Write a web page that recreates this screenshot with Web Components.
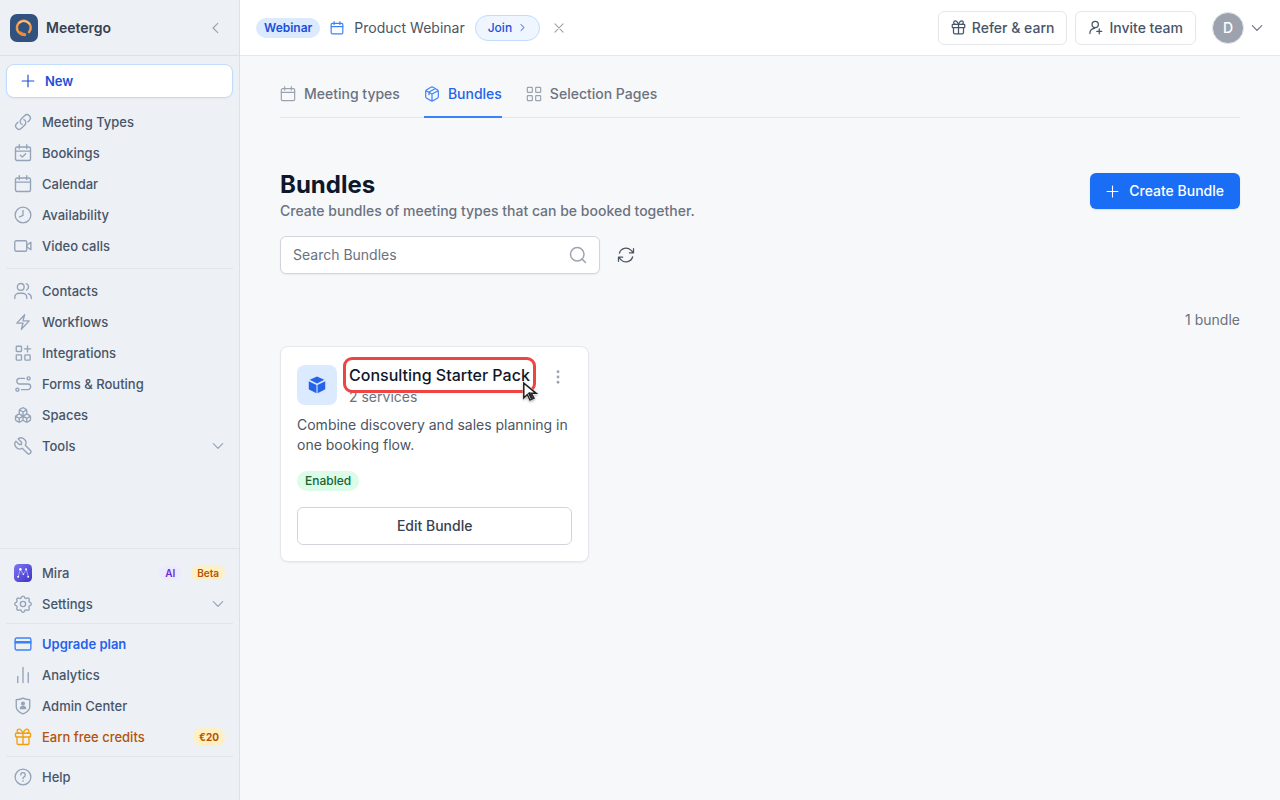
<!DOCTYPE html>
<html lang="en">
<head>
<meta charset="utf-8">
<meta name="viewport" content="width=device-width, initial-scale=1">
<title>Bundles - Meetergo</title>
<style>
  :root {
    --blue-50: #eff6ff;
    --blue-100: #dbeafe;
    --blue-200: #bfdbfe;
    --blue-500: #3b82f6;
    --blue-600: #2563eb;
    --blue-700: #1d4ed8;
    --primary: #1a6ef5;
    --gray-200: #e5e7eb;
    --gray-300: #d1d5db;
    --gray-400: #9ca3af;
    --gray-500: #6b7280;
    --gray-600: #4b5563;
    --gray-700: #374151;
    --gray-900: #0f172a;
    --slate-400: #94a3b8;
    --slate-600: #475569;
    --page-bg: #f7f8fa;
    --sidebar-bg: #edf0f5;
    --sidebar-line: #e2e6ec;
  }
  body {
    margin: 0;
    background: var(--page-bg);
    color: var(--gray-900);
    font: 14px/20px Inter, "Liberation Sans", sans-serif;
  }
</style>
</head>
<body>
<mg-app>
  <mg-sidebar slot="sidebar">
    <mg-nav-item icon="link" label="Meeting Types"></mg-nav-item>
    <mg-nav-item icon="calendar-check" label="Bookings"></mg-nav-item>
    <mg-nav-item icon="calendar" label="Calendar"></mg-nav-item>
    <mg-nav-item icon="clock" label="Availability"></mg-nav-item>
    <mg-nav-item icon="video" label="Video calls"></mg-nav-item>
    <mg-divider></mg-divider>
    <mg-nav-item icon="users" label="Contacts"></mg-nav-item>
    <mg-nav-item icon="bolt" label="Workflows"></mg-nav-item>
    <mg-nav-item icon="grid-plus" label="Integrations"></mg-nav-item>
    <mg-nav-item icon="route" label="Forms &amp; Routing"></mg-nav-item>
    <mg-nav-item icon="boxes" label="Spaces"></mg-nav-item>
    <mg-nav-item icon="wrench" label="Tools" expandable></mg-nav-item>

    <mg-nav-item slot="footer" icon="mira" label="Mira">
      <mg-badge tone="purple" size="tiny">AI</mg-badge>
      <mg-badge tone="amber" size="tiny">Beta</mg-badge>
    </mg-nav-item>
    <mg-nav-item slot="footer" icon="gear" label="Settings" expandable></mg-nav-item>
    <mg-divider slot="footer" compact></mg-divider>
    <mg-nav-item slot="footer" icon="card" label="Upgrade plan" tone="blue"></mg-nav-item>
    <mg-nav-item slot="footer" icon="bars" label="Analytics"></mg-nav-item>
    <mg-nav-item slot="footer" icon="shield-user" label="Admin Center"></mg-nav-item>
    <mg-nav-item slot="footer" icon="gift" label="Earn free credits" tone="amber">
      <mg-badge tone="amber" size="small">€20</mg-badge>
    </mg-nav-item>
    <mg-divider slot="footer" compact></mg-divider>
    <mg-nav-item slot="footer" icon="help" label="Help"></mg-nav-item>
  </mg-sidebar>

  <mg-topbar slot="topbar" initial="D">
    <mg-badge slot="event" tone="blue">Webinar</mg-badge>
    <span slot="event-title">Product Webinar</span>
    <mg-button slot="actions" icon="gift">Refer &amp; earn</mg-button>
    <mg-button slot="actions" icon="user-plus">Invite team</mg-button>
  </mg-topbar>

  <mg-tabs>
    <mg-tab icon="calendar">Meeting types</mg-tab>
    <mg-tab icon="package" active>Bundles</mg-tab>
    <mg-tab icon="grid">Selection Pages</mg-tab>
  </mg-tabs>
  <mg-page-header heading="Bundles" subtitle="Create bundles of meeting types that can be booked together.">
    <mg-button variant="primary" icon="plus">Create Bundle</mg-button>
  </mg-page-header>
  <mg-search placeholder="Search Bundles"></mg-search>
  <mg-bundle-list count="1 bundle">
    <mg-bundle-card heading="Consulting Starter Pack" services="2 services" highlighted>
      Combine discovery and sales planning in one booking flow.
      <mg-badge slot="status" tone="green">Enabled</mg-badge>
    </mg-bundle-card>
  </mg-bundle-list>
</mg-app>

<script>
(function() {
  'use strict';

  // 24x24 stroke icons
  const ICONS = {
    'plus': '<path d="M12 2v20M2 12h20"/>',
    'close': '<path d="M5 5l14 14M19 5L5 19"/>',
    'chevron-left': '<path d="M15 4l-8 8 8 8"/>',
    'chevron-right': '<path d="M8 4l8 8-8 8"/>',
    'chevron-down': '<path d="M4 8l8 8 8-8"/>',
    'link': '<path d="M13.19 8.688a4.5 4.5 0 0 1 1.242 7.244l-4.5 4.5a4.5 4.5 0 0 1-6.364-6.364l1.757-1.757m13.35-.622 1.757-1.757a4.5 4.5 0 0 0-6.364-6.364l-4.5 4.5a4.5 4.5 0 0 0 1.242 7.244"/>',
    'calendar': '<rect x="2" y="4" width="20" height="18" rx="2"/><path d="M2 9.500h20M7 1v5M17 1v5"/>',
    'calendar-check': '<rect x="2" y="4" width="20" height="18" rx="2"/><path d="M2 9.500h20M7 1v5M17 1v5M8.500 15l2.500 2.500 4.500-4.500"/>',
    'clock': '<circle cx="12" cy="12" r="10.500"/><path d="M12 6v6.500l-4.500 2"/>',
    'video': '<rect x="1" y="5" width="16" height="14" rx="2"/><path d="M17 11l5.500-4v10L17 13"/>',
    'users': '<circle cx="9" cy="6.500" r="4.500"/><path d="M1 22v-1.500C1 17 4 15 7 15h4c3 0 6 2 6 5.500V22M16.500 2.300a4.500 4.500 0 0 1 0 8.400M19 15.500c2.500 1 4 3 4 5V22"/>',
    'bolt': '<path d="m3.750 13.500 10.500-11.250L12 10.500h8.250L9.750 21.750 12 13.500H3.750Z"/>',
    'grid': '<rect x="2" y="2" width="7.500" height="7.500" rx="1"/><rect x="14.500" y="2" width="7.500" height="7.500" rx="1"/><rect x="2" y="14.500" width="7.500" height="7.500" rx="1"/><rect x="14.500" y="14.500" width="7.500" height="7.500" rx="1"/>',
    'grid-plus': '<rect x="3" y="3" width="7" height="7" rx="1"/><rect x="3" y="14.500" width="7" height="7" rx="1"/><rect x="14.500" y="14.500" width="7" height="7" rx="1"/><path d="M18 2.500v8M14 6.500h8"/>',
    'route': '<circle cx="4.500" cy="19.500" r="2"/><circle cx="19.500" cy="4.500" r="2"/><path d="M10 19.500h8.500a3.750 3.750 0 0 0 0-7.500h-11a3.750 3.750 0 0 1 0-7.500H14"/>',
    'boxes': '<path d="M2.970 12.920A2 2 0 0 0 2 14.630v3.240a2 2 0 0 0 .970 1.710l3 1.800a2 2 0 0 0 2.060 0L12 19v-5.500l-5-3-4.030 2.420ZM7 16.500l-4.740-2.850M7 16.500l5-3M7 16.500v5.170M12 13.500V19l3.970 2.380a2 2 0 0 0 2.060 0l3-1.800a2 2 0 0 0 .970-1.710v-3.240a2 2 0 0 0-.970-1.710L17 10.500l-5 3ZM17 16.500l-5-3M17 16.500l4.740-2.850M17 16.500v5.170M7.970 4.420A2 2 0 0 0 7 6.130v4.370l5 3 5-3V6.130a2 2 0 0 0-.970-1.710l-3-1.800a2 2 0 0 0-2.060 0l-3 1.800ZM12 8 7.260 5.150M12 8l4.740-2.850M12 13.500V8"/>',
    'wrench': '<path d="M7 10h3V7L5.500 2.500a6.500 6.500 0 0 1 9.500 8.500l6.700 6.700a2.500 2.500 0 0 1-4 4L11 15a6.500 6.500 0 0 1-8.500-9.500L7 10z"/>',
    'gear': '<circle cx="12" cy="12" r="3.500"/><path d="M9.950 3c.520-2.100 3.580-2.100 4.100 0a2.100 2.100 0 0 0 3.150 1.300c1.890-1.150 4.050 1 2.900 2.900A2.100 2.100 0 0 0 21.400 9.950c2.100.520 2.100 3.580 0 4.100a2.100 2.100 0 0 0-1.300 3.150c1.150 1.890-1 4.050-2.900 2.900a2.100 2.100 0 0 0-3.150 1.300c-.520 2.100-3.580 2.100-4.100 0a2.100 2.100 0 0 0-3.150-1.300c-1.890 1.150-4.050-1-2.900-2.900a2.100 2.100 0 0 0-1.300-3.150c-2.100-.520-2.100-3.580 0-4.100a2.100 2.100 0 0 0 1.300-2.750c-1.150-1.890 1-4.050 2.900-2.900A2.100 2.100 0 0 0 9.950 3z"/>',
    'card': '<rect x="1.500" y="4" width="21" height="16" rx="2"/><path d="M1.500 9h21M1.500 10.500h21"/>',
    'bars': '<path d="M5 14v8M12 2v20M19 9v13"/>',
    'shield-user': '<path d="M12 1.500c2.500 1.500 5.500 2 9 2V13c0 4.500-4 7.500-9 9.500-5-2-9-5-9-9.500V3.500c3.500 0 6.500-.500 9-2z"/><circle cx="12" cy="8.800" r="1.800" fill="currentColor"/><path fill="currentColor" d="M8.500 15.500c0-4 7-4 7 0z"/>',
    'gift': '<rect x="2" y="7" width="20" height="5" rx="1"/><path d="M4 12v8a2 2 0 0 0 2 2h12a2 2 0 0 0 2-2v-8M12 7v15M12 7C10.500 3.500 9 1.500 7 1.500A2.700 2.700 0 0 0 7 7M12 7c1.500-3.500 3-5.500 5-5.500A2.700 2.700 0 0 1 17 7"/>',
    'help': '<circle cx="12" cy="12" r="10.500"/><path d="M9 9.200a3 3 0 1 1 4.500 2.600c-1 .600-1.500 1.100-1.500 2.200M12 17v.500"/>',
    'user-plus': '<circle cx="11.500" cy="7" r="5"/><path d="M3 21.500c0-4.500 3-7.500 7.500-8M18 14v8M14 18h8"/>',
    'package': '<path d="M10.500 1.900a3 3 0 0 1 3 0l6.500 3.700a3 3 0 0 1 1.500 2.600v7.600a3 3 0 0 1-1.500 2.600l-6.500 3.700a3 3 0 0 1-3 0L4 18.400a3 3 0 0 1-1.500-2.600V8.200A3 3 0 0 1 4 5.600zM3 7l9 5 9-5M12 12v10.300M16.500 4L7.500 9v4"/>',
    'search': '<circle cx="11" cy="11" r="9"/><path d="M17.500 17.500L22 22"/>',
    'refresh': '<path d="M16.023 9.348h4.992v-.001M2.985 19.644v-4.992m0 0h4.992m-4.993 0 3.181 3.183a8.250 8.250 0 0 0 13.803-3.700M4.031 9.865a8.250 8.250 0 0 1 13.803-3.700l3.181 3.182m0-4.991v4.990"/>',
    'dots': '<g fill="currentColor" stroke="none"><circle cx="12" cy="3" r="2.400"/><circle cx="12" cy="12" r="2.400"/><circle cx="12" cy="21" r="2.400"/></g>',
    'cube': '<g fill="currentColor" stroke="none"><path d="M12 .800l9.800 4.300L12 10 2.200 5.100z"/><path d="M1 7l10.300 5v11L2 18.300a1.800 1.800 0 0 1-1-1.600z"/><path d="M23 7l-10.300 5v11l9.300-4.700a1.800 1.800 0 0 0 1-1.600z"/></g>',
    'mira': `<defs><linearGradient id="g" x1="0" y1="0" x2="1" y2="1"><stop offset="0" stop-color="#7c78f5"/><stop offset="1" stop-color="#4030c4"/></linearGradient></defs>
      <rect width="24" height="24" rx="6" fill="url(#g)" stroke="none"/>
      <path d="M5.500 17L8.500 7l4 7 4-7 2.500 10" stroke="#b9b4ff" stroke-width="1"/>
      <g fill="#fff" stroke="none"><circle cx="8.500" cy="7" r="1.700"/><circle cx="16" cy="7" r="1.300"/><circle cx="5.500" cy="17" r="1.300"/><circle cx="12.500" cy="13.500" r="1"/><circle cx="19" cy="17" r="1.300"/></g>`,
    'logo': `<rect width="24" height="24" rx="6" fill="#31517f" stroke="none"/>
      <path d="M12.500 17.600a5.900 5.900 0 1 1 3.800-2" stroke="#f29a45" stroke-width="2"/>
      <path d="M8 7.500a5.900 5.900 0 0 1 8.500.800" stroke="#eec08a" stroke-width="1.600"/>
      <path d="M9 16.200a6 6 0 0 0 3.500 1.400" stroke="#f08a35" stroke-width="2.800"/>`
  };

  // Shared base: stamps the class template into an open shadow root
  class MgElement extends HTMLElement {
    constructor() {
      super();
      this.attachShadow({ mode: 'open' });
    }

    connectedCallback() {
      const template = document.createElement('template');
      template.innerHTML = this.render();
      this.shadowRoot.replaceChildren(template.content.cloneNode(true));
    }

    attr(name) {
      return (this.getAttribute(name) || '').replace(/&/g, '&amp;').replace(/</g, '&lt;');
    }
  }

  class MgIcon extends MgElement {
    render() {
      return `
        <style>
          :host { display: inline-flex; flex: none; width: var(--icon-size, 18px); height: var(--icon-size, 18px); }
          svg { width: 100%; height: 100%; overflow: visible; }
        </style>
        <svg viewBox="0 0 24 24" fill="none" stroke="currentColor" stroke-width="${this.getAttribute('weight') || 1.8}"
          stroke-linecap="round" stroke-linejoin="round" aria-hidden="true">${ICONS[this.getAttribute('name')] || ''}</svg>`;
    }
  }

  class MgBadge extends MgElement {
    render() {
      return `
        <style>
          :host {
            display: inline-flex;
            flex: none;
            align-items: center;
            padding: 0 8px;
            border-radius: 10px;
            font-size: 12px;
            line-height: 20px;
            font-weight: 500;
          }
          :host([tone="blue"]) { background: var(--blue-100); color: var(--blue-700); font-weight: 600; }
          :host([tone="green"]) { background: #dcfce7; color: #166534; }
          :host([tone="purple"]) { background: #ede9fe; color: #6d28d9; }
          :host([tone="amber"]) { background: #fef0c3; color: #b45309; }
          :host([size="tiny"]) { padding: 0 6px; font-size: 10px; line-height: 14px; font-weight: 600; }
          :host([size="small"]) { padding: 0 6px; font-size: 10px; line-height: 18px; font-weight: 700; }
        </style>
        <slot></slot>`;
    }
  }

  class MgDivider extends MgElement {
    render() {
      return `
        <style>
          :host { display: block; height: 1px; margin: 6px 0; background: var(--sidebar-line); }
          :host([compact]) { margin: 3px 0 4px; }
        </style>`;
    }
  }

  class MgNavItem extends MgElement {
    render() {
      const chevron = this.hasAttribute('expandable') ? '<mg-icon class="chevron" name="chevron-down" weight="2"></mg-icon>' : '';
      return `
        <style>
          :host { display: block; --item-icon: var(--slate-400); --item-text: var(--slate-600); }
          :host([tone="blue"]) { --item-icon: var(--blue-500); --item-text: var(--blue-600); }
          :host([tone="amber"]) { --item-icon: #f59e0b; --item-text: #b45309; }
          a {
            display: flex;
            align-items: center;
            gap: 10px;
            height: 30px;
            padding: 0 8px;
            color: var(--item-text);
            font-size: 13px;
            line-height: 16px;
            font-weight: 500;
            text-decoration: none;
          }
          :host([tone="blue"]) a { font-weight: 600; }
          mg-icon { color: var(--item-icon); }
          .label { flex: 1; white-space: nowrap; }
          .chevron { --icon-size: 14px; }
        </style>
        <a href="#">
          <mg-icon name="${this.attr('icon')}"></mg-icon>
          <span class="label">${this.attr('label')}</span>
          <slot></slot>${chevron}
        </a>`;
    }
  }

  class MgSidebar extends MgElement {
    render() {
      return `
        <style>
          :host {
            display: flex;
            flex-direction: column;
            box-sizing: border-box;
            width: 240px;
            min-height: 100vh;
            background: var(--sidebar-bg);
            border-right: 1px solid #dde1e7;
          }
          header {
            display: flex;
            align-items: center;
            gap: 8px;
            height: 55px;
            padding: 0 16px 0 10px;
            border-bottom: 1px solid #dde1e7;
            color: var(--gray-700);
            font-weight: 600;
          }
          header mg-icon { --icon-size: 28px; }
          header span { flex: 1; }
          button { font: inherit; cursor: pointer; }
          .collapse { display: flex; padding: 0; border: 0; background: none; color: var(--gray-400); }
          .collapse mg-icon { --icon-size: 14px; }
          nav { display: flex; flex-direction: column; gap: 1px; padding: 8px 6px; }
          .new {
            display: flex;
            align-items: center;
            gap: 10px;
            height: 34px;
            margin-bottom: 8px;
            padding: 0 14px;
            border: 1px solid var(--blue-200);
            border-radius: 8px;
            background: #fff;
            color: var(--blue-700);
            font-size: 13px;
            font-weight: 600;
            box-shadow: 0 1px 2px rgb(0 0 0 / 4%);
          }
          .new mg-icon { --icon-size: 14px; }
          .footer { margin-top: auto; padding-top: 9px; border-top: 1px solid var(--sidebar-line); }
        </style>
        <header>
          <mg-icon name="logo"></mg-icon>
          <span>Meetergo</span>
          <button class="collapse" type="button" aria-label="Collapse sidebar"><mg-icon name="chevron-left" weight="2"></mg-icon></button>
        </header>
        <nav aria-label="Main">
          <button class="new" type="button"><mg-icon name="plus" weight="2"></mg-icon>New</button>
          <slot></slot>
        </nav>
        <nav class="footer" aria-label="Account"><slot name="footer"></slot></nav>`;
    }
  }

  class MgButton extends MgElement {
    render() {
      return `
        <style>
          :host { display: inline-flex; flex: none; }
          button {
            display: flex;
            flex: 1;
            align-items: center;
            justify-content: center;
            gap: 6px;
            height: 34px;
            padding: 0 12px;
            border: 1px solid var(--gray-200);
            border-radius: 6px;
            background: #fff;
            color: var(--slate-600);
            font: inherit;
            font-weight: 500;
            cursor: pointer;
          }
          mg-icon { --icon-size: 15px; }
          :host([variant="primary"]) button {
            gap: 10px;
            height: 36px;
            padding: 0 16px;
            border: 0;
            background: var(--primary);
            color: #fff;
            box-shadow: 0 1px 2px rgb(0 0 0 / 10%);
          }
          :host([variant="primary"]) mg-icon { --icon-size: 13px; }
          :host([variant="outline"]) button { height: 38px; border-color: var(--gray-300); color: var(--gray-700); }
        </style>
        <button type="button">${this.hasAttribute('icon') ? `<mg-icon name="${this.attr('icon')}" weight="2"></mg-icon>` : ''}<slot></slot></button>`;
    }
  }

  class MgTopbar extends MgElement {
    render() {
      return `
        <style>
          :host {
            display: flex;
            align-items: center;
            justify-content: space-between;
            height: 55px;
            padding: 0 16px;
            background: #fff;
            border-bottom: 1px solid var(--gray-200);
          }
          div { display: flex; align-items: center; gap: 10px; }
          button { display: flex; align-items: center; padding: 0; border: 0; background: none; font: inherit; cursor: pointer; }
          .event { color: var(--gray-600); }
          .event > mg-icon { --icon-size: 14px; color: var(--blue-500); }
          .join {
            gap: 6px;
            height: 26px;
            padding: 0 12px;
            border: 1px solid var(--blue-200);
            border-radius: 13px;
            background: var(--blue-50);
            color: var(--blue-700);
            font-size: 12px;
            font-weight: 500;
          }
          .join mg-icon { --icon-size: 9px; }
          .dismiss { padding: 0 2px; color: var(--gray-400); }
          .dismiss mg-icon { --icon-size: 14px; }
          .actions { gap: 8px; }
          .account { gap: 6px; margin-left: 8px; color: var(--gray-500); }
          .avatar {
            box-sizing: border-box;
            width: 32px;
            height: 32px;
            border: 1px solid #e2e6ec;
            border-radius: 50%;
            background: var(--gray-400);
            color: #fff;
            line-height: 30px;
            font-weight: 500;
          }
          .account mg-icon { --icon-size: 14px; }
        </style>
        <div class="event">
          <slot name="event"></slot>
          <mg-icon name="calendar" weight="2"></mg-icon>
          <slot name="event-title"></slot>
          <button class="join" type="button">Join<mg-icon name="chevron-right" weight="2.500"></mg-icon></button>
          <button class="dismiss" type="button" aria-label="Dismiss"><mg-icon name="close" weight="2"></mg-icon></button>
        </div>
        <div class="actions">
          <slot name="actions"></slot>
          <button class="account" type="button" aria-label="Account menu">
            <span class="avatar">${this.attr('initial')}</span>
            <mg-icon name="chevron-down" weight="2"></mg-icon>
          </button>
        </div>`;
    }
  }

  class MgTabs extends MgElement {
    render() {
      return `
        <style>
          :host { display: flex; gap: 24px; border-bottom: 1px solid var(--gray-200); }
        </style>
        <slot></slot>`;
    }
  }

  class MgTab extends MgElement {
    render() {
      return `
        <style>
          :host { display: block; margin-bottom: -1px; border-bottom: 2px solid transparent; color: var(--gray-500); --tab-icon: var(--gray-400); }
          :host([active]) { border-color: var(--blue-500); color: var(--blue-600); --tab-icon: var(--blue-500); }
          a { display: flex; align-items: center; gap: 8px; padding: 4px 0 12px; color: inherit; font-weight: 500; text-decoration: none; }
          mg-icon { --icon-size: 16px; color: var(--tab-icon); }
        </style>
        <a href="#"><mg-icon name="${this.attr('icon')}"></mg-icon><slot></slot></a>`;
    }
  }

  class MgPageHeader extends MgElement {
    render() {
      return `
        <style>
          :host { display: flex; align-items: flex-start; justify-content: space-between; margin-top: 51px; }
          h1 { margin: 0; font-size: 24px; line-height: 32px; font-weight: 700; }
          p { margin: 0; color: var(--gray-500); font-weight: 500; }
          .action { padding-top: 4px; }
        </style>
        <div>
          <h1>${this.attr('heading')}</h1>
          <p>${this.attr('subtitle')}</p>
        </div>
        <div class="action"><slot></slot></div>`;
    }
  }

  class MgSearch extends MgElement {
    render() {
      return `
        <style>
          :host { display: flex; align-items: center; gap: 16px; margin-top: 15px; }
          label {
            display: flex;
            align-items: center;
            box-sizing: border-box;
            width: 320px;
            height: 38px;
            padding: 0 12px;
            border: 1px solid var(--gray-300);
            border-radius: 6px;
            background: #fff;
            color: var(--gray-400);
            box-shadow: 0 1px 2px rgb(0 0 0 / 5%);
          }
          input { flex: 1; min-width: 0; padding: 0; border: 0; outline: 0; background: none; color: var(--gray-900); font: inherit; }
          input::placeholder { color: var(--gray-500); opacity: 1; }
          button { display: flex; padding: 0; border: 0; background: none; color: var(--gray-600); cursor: pointer; }
          mg-icon { --icon-size: 18px; }
          button mg-icon { --icon-size: 20px; }
        </style>
        <label>
          <input type="search" aria-label="${this.attr('placeholder')}" placeholder="${this.attr('placeholder')}">
          <mg-icon name="search" weight="2"></mg-icon>
        </label>
        <button type="button" aria-label="Refresh"><mg-icon name="refresh" weight="1.500"></mg-icon></button>`;
    }
  }

  class MgBundleList extends MgElement {
    render() {
      return `
        <style>
          :host { display: block; margin-top: 36px; }
          p { margin: 0 0 16px; color: var(--gray-500); text-align: right; }
          .grid { display: grid; grid-template-columns: repeat(auto-fill, minmax(300px, 1fr)); gap: 16px; }
        </style>
        <p>${this.attr('count')}</p>
        <div class="grid"><slot></slot></div>`;
    }
  }

  class MgBundleCard extends MgElement {
    render() {
      const pointer = `
        <svg class="pointer" viewBox="0 0 18 24" aria-hidden="true">
          <path d="M2 2v16.500l4-3.500 3 6 4.500-2-3-5.500h5.500z" fill="#222" stroke="#fff" stroke-width="2.500" stroke-linejoin="round"/>
          <path d="M2 2v16.500l4-3.500 3 6 4.500-2-3-5.500h5.500z" fill="#fff" stroke="#222" stroke-width="1.700"/>
          <path d="M6.500 13l3.500 7 2.500-1.200-3.500-6.800z" fill="#222"/>
        </svg>`;
      return `
        <style>
          :host {
            display: flex;
            flex-direction: column;
            gap: 16px;
            padding: 16px;
            border: 1px solid var(--gray-200);
            border-radius: 8px;
            background: #fff;
            box-shadow: 0 1px 2px rgb(0 0 0 / 5%);
          }
          .head { display: flex; align-items: center; gap: 12px; }
          .tile {
            display: grid;
            place-items: center;
            width: 40px;
            height: 40px;
            border-radius: 8px;
            background: var(--blue-100);
            color: var(--blue-600);
            --icon-size: 18px;
          }
          .titles { flex: 1; }
          h2 { position: relative; width: fit-content; margin: 0; font-size: 16px; line-height: 24px; font-weight: 500; }
          .services { margin: 0; color: var(--gray-500); }
          /* ring and pointer lie over the heading */
          :host([highlighted]) h2::after {
            content: "";
            position: absolute;
            inset: -6px;
            border: 3px solid #ef4444;
            border-radius: 9px;
          }
          .pointer {
            position: absolute;
            z-index: 1;
            top: 18px;
            left: 100%;
            width: 16px;
            height: 22px;
            margin-left: -8px;
            filter: drop-shadow(0 1px 1px rgb(0 0 0 / 30%));
          }
          .menu {
            display: flex;
            align-self: flex-start;
            padding: 7px;
            border: 0;
            background: none;
            color: var(--gray-400);
            cursor: pointer;
            --icon-size: 14px;
          }
          .text { margin: -8px 0 0; color: var(--gray-600); }
          .status { display: flex; }
        </style>
        <div class="head">
          <span class="tile"><mg-icon name="cube"></mg-icon></span>
          <div class="titles">
            <h2>${this.attr('heading')}${this.hasAttribute('highlighted') ? pointer : ''}</h2>
            <p class="services">${this.attr('services')}</p>
          </div>
          <button class="menu" type="button" aria-label="Bundle options"><mg-icon name="dots"></mg-icon></button>
        </div>
        <p class="text"><slot></slot></p>
        <div class="status"><slot name="status"></slot></div>
        <mg-button variant="outline">Edit Bundle</mg-button>`;
    }
  }

  class MgApp extends MgElement {
    render() {
      return `
        <style>
          :host { display: grid; grid-template-columns: auto minmax(0, 1fr); min-height: 100vh; }
          main { padding: 24px 40px 40px; }
        </style>
        <slot name="sidebar"></slot>
        <div>
          <slot name="topbar"></slot>
          <main><slot></slot></main>
        </div>`;
    }
  }

  customElements.define('mg-icon', MgIcon);
  customElements.define('mg-badge', MgBadge);
  customElements.define('mg-divider', MgDivider);
  customElements.define('mg-nav-item', MgNavItem);
  customElements.define('mg-sidebar', MgSidebar);
  customElements.define('mg-button', MgButton);
  customElements.define('mg-topbar', MgTopbar);
  customElements.define('mg-tabs', MgTabs);
  customElements.define('mg-tab', MgTab);
  customElements.define('mg-page-header', MgPageHeader);
  customElements.define('mg-search', MgSearch);
  customElements.define('mg-bundle-list', MgBundleList);
  customElements.define('mg-bundle-card', MgBundleCard);
  customElements.define('mg-app', MgApp);
})();
</script>
</body>
</html>
